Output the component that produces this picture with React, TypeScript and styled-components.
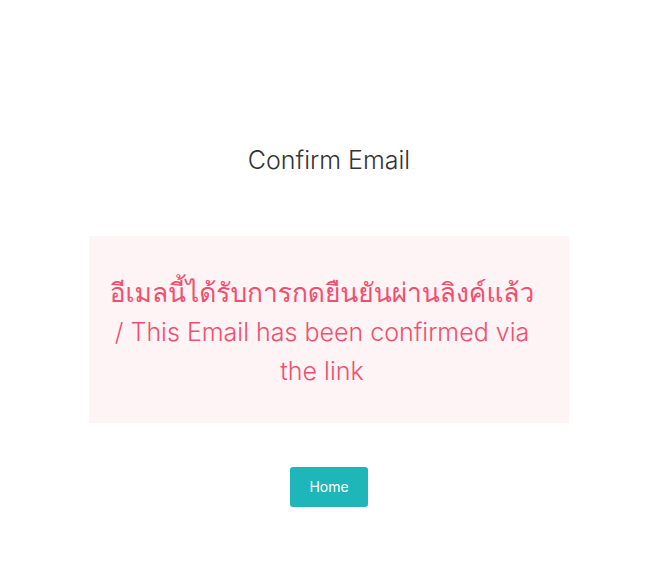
import React from 'react';
import styled, { createGlobalStyle } from 'styled-components';

const GlobalStyle = createGlobalStyle`
  html, body {
    margin: 0;
    padding: 0;
    background: #fff;
    font-family: Inter, Loma, 'Noto Sans Thai', 'Noto Sans', sans-serif;
  }
`;

function App() {
  return (
    <>
      <GlobalStyle />
      <StyledPage>
        <StyledTitle>Confirm Email</StyledTitle>
        <StyledAlert>
          <StyledThai lang="th">อีเมลนี้ได้รับการกดยืนยันผ่านลิงค์แล้ว</StyledThai> / This Email has been
          confirmed via the link
        </StyledAlert>
        <StyledButton href="#home">Home</StyledButton>
      </StyledPage>
    </>
  );
}

const StyledPage = styled.div`
  display: flex;
  flex-direction: column;
  align-items: center;
  padding: 141px 6px 0 0;
`;

const StyledTitle = styled.h3`
  margin: 0;
  font-size: 25px;
  font-weight: 300;
  line-height: 38px;
  color: #333;
`;

const StyledAlert = styled.div`
  box-sizing: border-box;
  width: 480px;
  margin-top: 57px;
  padding: 37px 33px 32px 19px;
  background: #fef4f6;
  color: #f0506e;
  font-size: 25px;
  font-weight: 300;
  line-height: 39px;
  text-align: center;
`;

const StyledThai = styled.span`
  font-size: 26.3px;
  font-weight: 400;
`;

const StyledButton = styled.a`
  margin-top: 44px;
  display: inline-block;
  padding: 0 19px;
  line-height: 40px;
  border-radius: 3px;
  background: #1fb6b9;
  color: #fff;
  font-size: 14px;
  text-decoration: none;
`;

export default App;
